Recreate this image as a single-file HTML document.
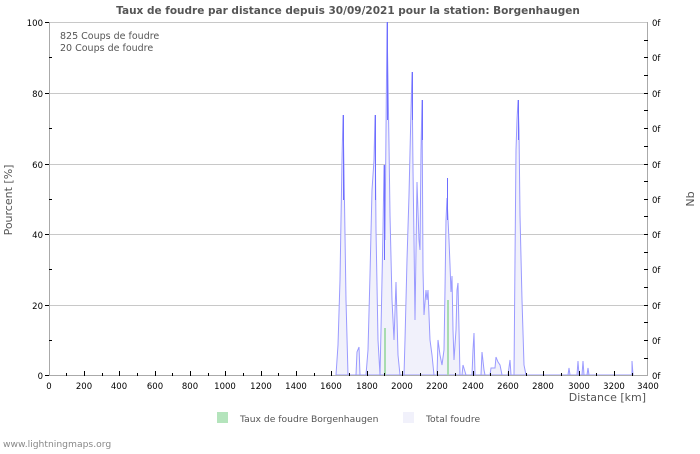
<!DOCTYPE html>
<html><head><meta charset="utf-8"><style>
body{margin:0;background:#fff;width:700px;height:450px;overflow:hidden;font-family:"DejaVu Sans","Liberation Sans",sans-serif}
svg text{font-family:"DejaVu Sans","Liberation Sans",sans-serif}
</style></head><body>
<svg width="700" height="450" viewBox="0 0 700 450" xmlns="http://www.w3.org/2000/svg">
<rect width="700" height="450" fill="#fff"/>
<text x="348" y="14" text-anchor="middle" font-size="10.5" font-weight="bold" fill="#555">Taux de foudre par distance depuis 30/09/2021 pour la station: Borgenhaugen</text>
<g stroke="#c8c8c8" stroke-width="1">
<line x1="49" y1="22.5" x2="648" y2="22.5"/><line x1="49" y1="93.5" x2="648" y2="93.5"/>
<line x1="49" y1="164.5" x2="648" y2="164.5"/><line x1="49" y1="234.5" x2="648" y2="234.5"/>
<line x1="49" y1="305.5" x2="648" y2="305.5"/>
</g>
<polygon fill="#f1f1fb" stroke="#9a9aff" stroke-width="1" points="
336,375 338,345 340,280 342,160 343,115 344,170 346,300 348,375
356,375 357,352 359,347 360,375
366,375 368,350 370,275 372,190 374,160 375,115 376,230 378,340 380,375
381,330 383,230 384,165 385,240 387,22 388,80 389,145 390,215 392,300 394,340 396,282 398,355 400,375
404,375 405,340 407,260 409,195 411,110 412,72 413,170 414,240 415,320 417,182 419,240 420,250 421,150 422,100 423,270 424,315 426,290 427,300 428,290 430,340 432,355 434,375
437,375 438,340 440,355 442,365 444,350 445,290 446,220 447,198 449,240 450,265 451,292 452,276 453,330 454,360 456,330 457,290 458,283 460,375
462,375 463,365 466,375 472,375 473,350 474,333 475,375 481,375 482,352 484,370 485,375
490,375 491,368 495,368 496,357 498,362 500,365 502,375
508,375 510,360 511,375
514,375 515,260 516,150 517,120 518,100 519,130 520,215 522,300 524,365 526,375
568,375 569,368 570,375 577,375 578,361 579,375 582,375 583,361 584,375 587,375 588,368 589,375 632,375 632,361 633,375"/>
<g stroke="#6d6dff" stroke-width="1">
<line x1="343.5" y1="115" x2="343.5" y2="200"/><line x1="387.5" y1="22" x2="387.5" y2="120"/>
<line x1="375.5" y1="115" x2="375.5" y2="200"/><line x1="412.5" y1="72" x2="412.5" y2="120"/>
<line x1="422.5" y1="100" x2="422.5" y2="140"/><line x1="518.5" y1="100" x2="518.5" y2="140"/>
<line x1="384.5" y1="165" x2="384.5" y2="260"/><line x1="447.5" y1="178" x2="447.5" y2="220"/>
</g>
<rect x="384" y="328" width="2" height="47" fill="#a8dcb0"/>
<rect x="447" y="300" width="2" height="75" fill="#a8dcb0"/>
<line x1="49.5" y1="22" x2="49.5" y2="375" stroke="#aaa"/>
<line x1="647.5" y1="22" x2="647.5" y2="375" stroke="#aaa"/>
<line x1="49" y1="375.5" x2="648" y2="375.5" stroke="#aaa"/>
<g stroke="#000" stroke-width="1">
<path d="M49 57.5h3M49 128.5h3M49 199.5h3M49 269.5h3M49 340.5h3M45 22.5h4M45 93.5h4M45 164.5h4M45 234.5h4M45 305.5h4M45 375.5h4"/>
<path d="M644 40.5h4M644 57.5h4M644 75.5h4M644 93.5h4M644 110.5h4M644 128.5h4M644 146.5h4M644 164.5h4M644 181.5h4M644 199.5h4M644 216.5h4M644 234.5h4M644 252.5h4M644 269.5h4M644 287.5h4M644 305.5h4M644 322.5h4M644 340.5h4M644 358.5h4"/>
<path d="M66.5 373v3M84.5 371v5M102.5 373v3M119.5 371v5M137.5 373v3M155.5 371v5M172.5 373v3M190.5 371v5M208.5 373v3M225.5 371v5M243.5 373v3M261.5 371v5M278.5 373v3M296.5 371v5M314.5 373v3M331.5 371v5M349.5 373v3M367.5 371v5M384.5 373v3M402.5 371v5M420.5 373v3M437.5 371v5M455.5 373v3M473.5 371v5M490.5 373v3M508.5 371v5M526.5 373v3M543.5 371v5M561.5 373v3M579.5 371v5M596.5 373v3M614.5 371v5M632.5 373v3"/>
</g>
<g font-size="8.5" fill="#000" text-anchor="end">
<text x="43" y="26">100</text><text x="43" y="97">80</text><text x="43" y="168">60</text><text x="43" y="238">40</text><text x="43" y="309">20</text><text x="43" y="379">0</text>
</g>
<g font-size="8.5" fill="#000">
<text x="652" y="26">0f</text><text x="652" y="61">0f</text><text x="652" y="97">0f</text><text x="652" y="132">0f</text><text x="652" y="168">0f</text><text x="652" y="203">0f</text><text x="652" y="238">0f</text><text x="652" y="273">0f</text><text x="652" y="309">0f</text><text x="652" y="344">0f</text><text x="652" y="379">0f</text>
</g>
<g font-size="8.5" fill="#000" text-anchor="middle">
<text x="49" y="389">0</text><text x="84" y="389">200</text><text x="119" y="389">400</text><text x="155" y="389">600</text><text x="190" y="389">800</text><text x="225" y="389">1000</text><text x="261" y="389">1200</text><text x="296" y="389">1400</text><text x="331" y="389">1600</text><text x="367" y="389">1800</text><text x="402" y="389">2000</text><text x="437" y="389">2200</text><text x="473" y="389">2400</text><text x="508" y="389">2600</text><text x="543" y="389">2800</text><text x="579" y="389">3000</text><text x="614" y="389">3200</text><text x="648" y="389">3400</text>
</g>
<text x="646" y="401" font-size="11" fill="#555" text-anchor="end">Distance   [km]</text>
<text transform="translate(12,200) rotate(-90)" font-size="11" fill="#555" text-anchor="middle">Pourcent   [%]</text>
<text transform="translate(694,199) rotate(-90)" font-size="11" fill="#555" text-anchor="middle">Nb</text>
<text x="60" y="39" font-size="9.5" fill="#555">825  Coups de foudre</text>
<text x="60" y="51" font-size="9.5" fill="#555">20  Coups de foudre</text>
<rect x="217" y="412" width="11" height="11" fill="#b4e4bc"/>
<text x="240" y="422" font-size="9.2" fill="#555">Taux de foudre Borgenhaugen</text>
<rect x="403" y="412" width="11" height="11" fill="#f1f1fb"/>
<text x="426" y="422" font-size="9.2" fill="#555">Total foudre</text>
<text x="3" y="447" font-size="9.2" fill="#888">www.lightningmaps.org</text>
</svg>
</body></html>
